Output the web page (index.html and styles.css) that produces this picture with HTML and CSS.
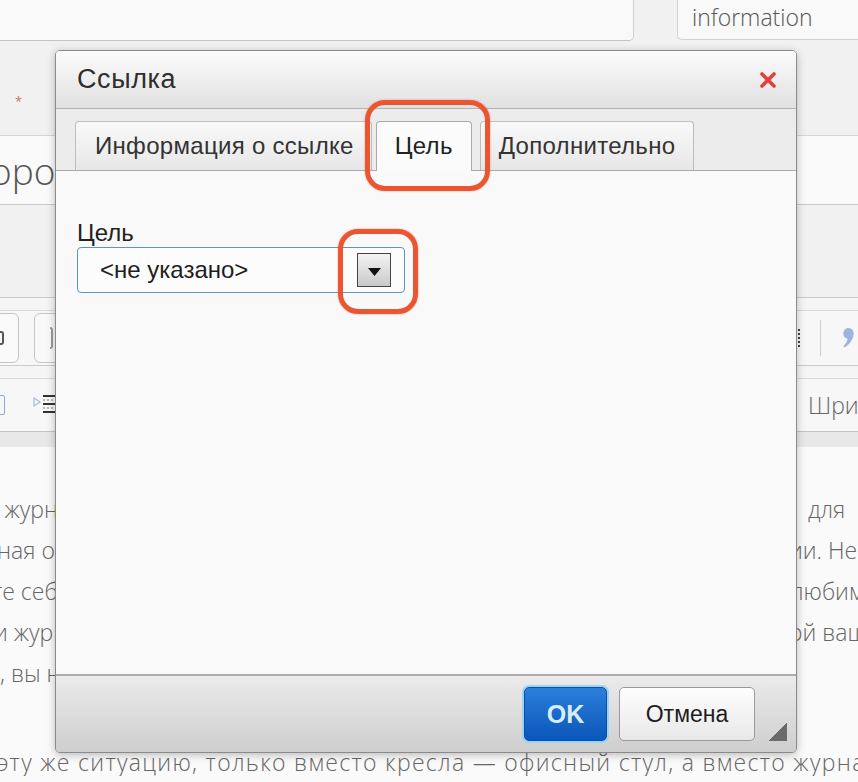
FILE: index.html
```html
<!DOCTYPE html>
<html>
<head>
    <title>Ссылка</title>
    <meta charset="UTF-8">
    <link rel="stylesheet" href="styles.css">
</head>
<body>
    <div class="page">
        <div class="top-area">
            <div class="top-row">
                <div class="title-field"></div>
                <div class="lang-tab">information</div>
            </div>
            <div class="meta-panel"><span class="required">*</span></div>
        </div>
        <div class="page-title">ороц</div>
        <div class="editor">
            <div class="editor-head"></div>
            <div class="tb-gap"></div>
            <div class="tb-row">
                <div class="tb-group">
                    <span class="tb-btn tb-btn-first"><span class="tb-glyph"></span></span>
                    <span class="tb-btn"><span class="tb-glyph tb-glyph-light"></span></span>
                </div>
                <div class="tb-group tb-right">
                    <span class="tb-dots"></span>
                    <span class="tb-sep"></span>
                    <svg class="tb-quote" width="15" height="22" viewBox="0 0 15 22">
                        <path d="M8 1a5.5 5.5 0 0 1 5.5 7c-0.8 5-4 9.5-9 12.5l-1.2-1.3c2.8-2.8 4-5 4.3-7.4A5.5 5.5 0 0 1 8 1z" fill="#9db4e3"/>
                    </svg>
                </div>
            </div>
            <div class="tb-gap"></div>
            <div class="tb-row tb-row-low">
                <div class="tb-group">
                    <span class="tb-cut"></span>
                    <svg class="tb-indent" width="24" height="22" viewBox="0 0 24 22">
                        <path d="M1 4l6 4-6 4z" fill="none" stroke="#a9b9d8" stroke-width="1.2"/>
                        <path d="M10 2h14M10 10h14M10 18h14" stroke="#333" stroke-width="2"/>
                        <path d="M10 6h14M10 14h14" stroke="#777" stroke-width="1" stroke-dasharray="2 2"/>
                    </svg>
                </div>
                <div class="tb-font">Шрифт</div>
            </div>
            <div class="editor-strip"></div>
            <div class="editor-text">
                <p class="line"><span class="l shift-1">о журнал или книгу, вы садитесь в любимое кресло</span><span class="r pad-1">для</span></p>
                <p class="line"><span class="l shift-2">ная обстановка, уютный свет от лампы, тишина в комнат</span><span class="r shift-3">ии. Не</span></p>
                <p class="line"><span class="l shift-3">те себя на месте читателя, который открывает свой</span><span class="r shift-4">любим</span></p>
                <p class="line"><span class="l shift-4">и журнал и ищет в нём ту статью, о которой</span><span class="r shift-3">ой ваш</span></p>
                <p class="line"><span class="l">, вы наверняка почувствуете разницу.</span><span class="r"></span></p>
                <p class="line"></p>
                <p class="line line-full shift-2">эту же ситуацию, только вместо кресла — офисный стул, а вместо журнала</p>
                <p class="line line-full">в руках у читателя мышь, и перед ним новостной сайт. Нет</p>
            </div>
        </div>
    </div>

    <div class="dialog">
        <div class="dlg-head">
            <span class="dlg-title">Ссылка</span>
            <svg class="dlg-close" width="18" height="18" viewBox="0 0 18 18">
                <path d="M3 3L15 15M15 3L3 15" stroke="#e2403b" stroke-width="3.6" stroke-linecap="round"/>
            </svg>
        </div>
        <div class="dlg-tabs">
            <div class="tab">Информация о ссылке</div>
            <div class="tab tab-active">Цель</div>
            <div class="tab">Дополнительно</div>
        </div>
        <div class="dlg-body">
            <div class="field-label">Цель</div>
            <div class="select">
                <span class="select-value">&lt;не указано&gt;</span>
                <span class="select-arrow">
                    <svg width="13" height="8" viewBox="0 0 13 8"><path d="M0 0H13L6.5 8z" fill="#111"/></svg>
                </span>
            </div>
        </div>
        <div class="dlg-foot">
            <button class="btn btn-ok">OK</button>
            <button class="btn btn-cancel">Отмена</button>
            <span class="resize-grip"></span>
        </div>
    </div>

    <div class="mark mark-tab"></div>
    <div class="mark mark-arrow"></div>
</body>
</html>
```

FILE: styles.css
```css
* {
    box-sizing: border-box;
}
body {
    margin: 0;
    width: 858px;
    height: 782px;
    overflow: hidden;
    position: relative;
    background-color: #fafafa;
    font-family: "Open Sans", sans-serif;
    color: #666;
}

/* page behind the dialog */
.top-area {
    background-color: #f1f1f1;
    border-bottom: 1px solid #d6d6d6;
}
.top-row {
    display: flex;
    height: 41px;
}
.title-field {
    width: 634px;
    background-color: #f9f9f9;
    border-right: 1px solid #cfcfcf;
    border-bottom: 1px solid #c4c4c4;
    border-bottom-right-radius: 5px;
}
.lang-tab {
    flex: 1;
    margin-left: 43px;
    height: 40px;
    padding-left: 14px;
    background-color: #f9f9f9;
    border-left: 1px solid #d2d2d2;
    border-bottom: 1px solid #d2d2d2;
    border-bottom-left-radius: 5px;
    font-size: 23px;
    font-weight: 300;
    line-height: 34px;
    color: #555;
}
.meta-panel {
    height: 94px;
    padding: 48px 0 0 15px;
}
.required {
    color: #d86a6a;
    font-size: 13px;
}
.page-title {
    height: 68px;
    font-size: 37px;
    font-weight: 300;
    line-height: 70px;
    color: #555;
    text-indent: -10px;
    white-space: nowrap;
}
.editor {
    border-top: 1px solid #c9c9c9;
}
.editor-head {
    height: 92px;
    background-color: #f1f1f1;
}
.tb-gap {
    height: 14px;
    background-color: #f5f5f5;
    border-top: 1px solid #cbcbcb;
    border-bottom: 1px solid #d9d9d9;
}
.tb-row {
    display: flex;
    justify-content: space-between;
    align-items: center;
    height: 54px;
    background-color: #f7f7f7;
}
.tb-row-low {
    height: 52px;
}
.tb-group {
    display: flex;
    align-items: center;
}
.tb-btn {
    display: flex;
    align-items: center;
    justify-content: flex-end;
    width: 40px;
    height: 50px;
    margin-right: 15px;
    border: 1px solid #c6c6c6;
    border-radius: 6px;
    background-color: #f9f9f9;
}
.tb-btn-first {
    margin-left: -21px;
}
.tb-glyph {
    width: 6px;
    height: 14px;
    margin-right: 14px;
    border: 2px solid #555;
    border-left: none;
    border-radius: 0 3px 3px 0;
}
.tb-glyph-light {
    border-color: #999;
    margin-right: 20px;
    height: 22px;
    width: 3px;
}
.tb-right {
    margin-right: 3px;
}
.tb-dots {
    width: 2px;
    height: 18px;
    border-left: 2px dotted #444;
}
.tb-sep {
    width: 1px;
    height: 36px;
    margin: 0 19px 0 20px;
    background-color: #cfcfcf;
}
.tb-quote {
    display: block;
}
.tb-cut {
    width: 14px;
    height: 20px;
    margin-left: -9px;
    border: 1px solid #8ea6d4;
    border-radius: 2px;
}
.tb-indent {
    display: block;
    margin-left: 28px;
}
.tb-font {
    width: 50px;
    overflow: hidden;
    white-space: nowrap;
    font-size: 23px;
    font-weight: 300;
    color: #666;
}
.editor-strip {
    height: 16px;
    background-color: #e8e8e8;
    border-top: 1px solid #c3c3c3;
}
.editor-text {
    padding-top: 42px;
}
.line {
    display: flex;
    height: 41px;
    margin: 0;
    font-size: 23px;
    font-weight: 300;
    line-height: 41px;
    white-space: nowrap;
    color: #666;
}
.line .l {
    flex: none;
    width: 797px;
    overflow: hidden;
}
.line .r {
    flex: 1;
    overflow: hidden;
}
.line-full {
    display: block;
    overflow: hidden;
    line-height: 54px;
    letter-spacing: 1.3px;
}
.shift-1 { text-indent: -15px; }
.shift-2 { text-indent: -3px; }
.shift-3 { text-indent: -8px; }
.shift-4 { text-indent: -6px; }
.pad-1 { padding-left: 11px; }

/* link dialog */
.dialog {
    position: absolute;
    left: 55px;
    top: 50px;
    width: 742px;
    height: 703px;
    display: flex;
    flex-direction: column;
    overflow: hidden;
    background-color: #f9f9f9;
    border: 1px solid #8a8a8a;
    border-radius: 5px;
    box-shadow: 0 2px 8px rgba(0,0,0,0.25);
    font-family: "Liberation Sans", Arial, sans-serif;
    color: #2b2b2b;
}
.dlg-head {
    flex: none;
    display: flex;
    align-items: center;
    justify-content: space-between;
    height: 58px;
    padding: 0 19px 0 21px;
    background: linear-gradient(#fbfbfb, #e1e1e1);
    border-bottom: 1px solid #b3b3b3;
}
.dlg-title {
    font-size: 27px;
    letter-spacing: 0.6px;
    color: #2e2e2e;
}
.dlg-close {
    display: block;
}
.dlg-tabs {
    flex: none;
    display: flex;
    align-items: flex-end;
    gap: 4px;
    height: 62px;
    padding-left: 19px;
    background-color: #ececec;
    border-bottom: 1px solid #a9a9a9;
}
.tab {
    height: 49px;
    padding: 0 18px;
    font-size: 24px;
    letter-spacing: 0.3px;
    line-height: 48px;
    color: #333;
    background: linear-gradient(#f9f9f9, #e7e7e7);
    border: 1px solid #bdbdbd;
    border-bottom: none;
    border-radius: 4px 4px 0 0;
}
.tab:first-child {
    padding: 0 17px 0 19px;
}
.tab-active {
    height: 50px;
    margin-bottom: -1px;
    margin-right: 4px;
    background: #fbfbfb;
    border-color: #aaa;
    color: #222;
}
.dlg-body {
    flex: 1;
    padding: 47px 21px 0;
}
.field-label {
    font-size: 24px;
    line-height: 29px;
    color: #222;
}
.select {
    display: flex;
    align-items: center;
    justify-content: space-between;
    width: 328px;
    height: 46px;
    padding: 0 13px 0 22px;
    background-color: #fcfcfc;
    border: 1px solid #5a97bd;
    border-radius: 4px;
    font-size: 24px;
    color: #1e1e1e;
}
.select-arrow {
    display: flex;
    align-items: center;
    justify-content: center;
    width: 34px;
    height: 34px;
    padding-top: 4px;
    background: linear-gradient(#f3f3f3, #c9c9c9);
    border: 1px solid #444;
}
.select-arrow svg {
    display: block;
}
.dlg-foot {
    position: relative;
    flex: none;
    display: flex;
    justify-content: flex-end;
    align-items: flex-start;
    gap: 12px;
    height: 78px;
    padding: 11px 41px 0 0;
    background: linear-gradient(#ebebeb, #cecece);
    border-top: 2px solid #adadad;
}
.btn {
    height: 54px;
    border-radius: 5px;
    font-family: "Liberation Sans", Arial, sans-serif;
    cursor: pointer;
}
.btn-ok {
    width: 83px;
    background: linear-gradient(#2b7fd9, #0b56bb);
    border: 1px solid #0a4fa8;
    box-shadow: 0 0 0 2px #9ad3f4;
    color: #d8eeff;
    font-size: 25px;
    font-weight: bold;
}
.btn-cancel {
    width: 136px;
    background: linear-gradient(#fefefe, #e8e8e8);
    border: 1px solid #9a9a9a;
    color: #1e1e1e;
    font-size: 23px;
}
.resize-grip {
    position: absolute;
    right: 9px;
    bottom: 11px;
    width: 19px;
    height: 19px;
    background: linear-gradient(135deg, transparent 50%, #6a6a6a 50%);
}

/* red annotation rings */
.mark {
    position: absolute;
    border: 5px solid #ea5632;
    border-radius: 20px;
    box-shadow: 0 0 2px rgba(234,86,50,0.6);
}
.mark-tab {
    left: 365px;
    top: 100px;
    width: 125px;
    height: 91px;
}
.mark-arrow {
    left: 338px;
    top: 229px;
    width: 80px;
    height: 85px;
}
```
